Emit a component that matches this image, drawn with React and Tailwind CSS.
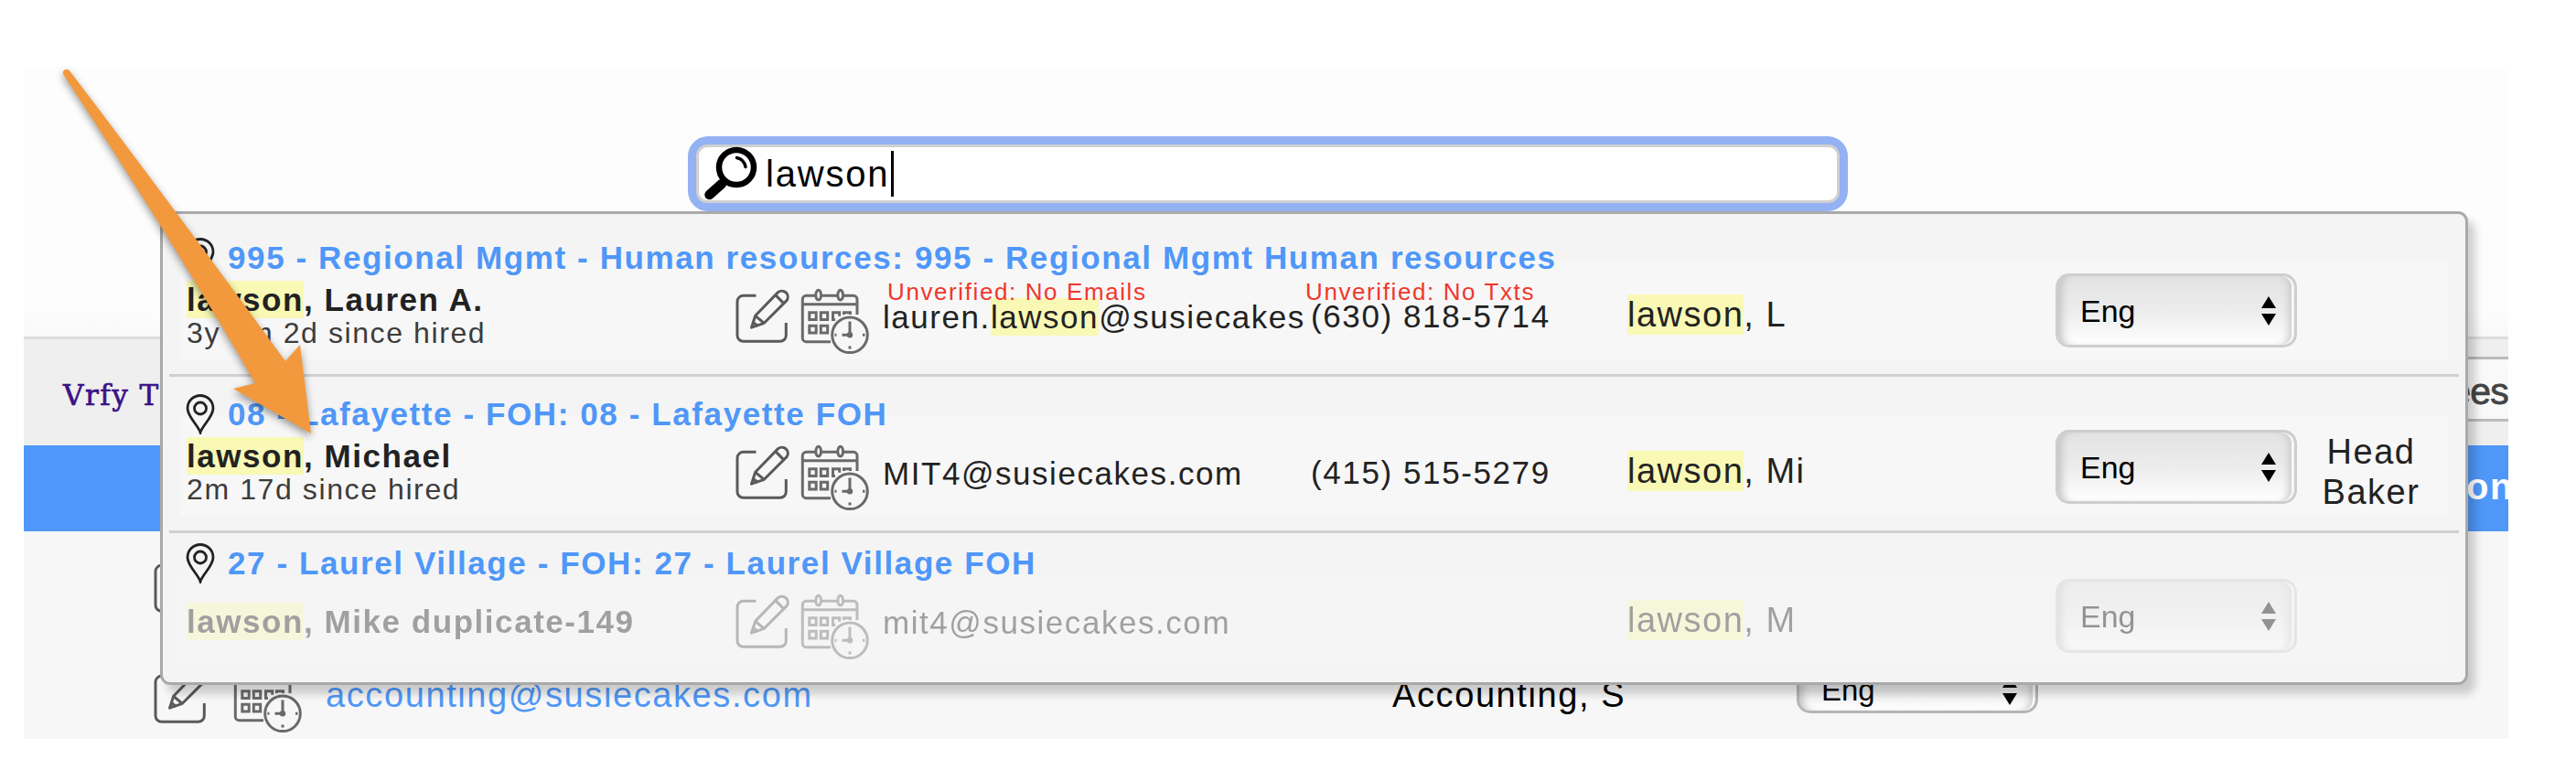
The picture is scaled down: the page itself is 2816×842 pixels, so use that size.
import clsx from "clsx";

const QUERY = "lawson";

const results = [
  {
    id: 1,
    location: "995 - Regional Mgmt - Human resources: 995 - Regional Mgmt Human resources",
    name: "lawson, Lauren A.",
    hired: "3y 4m 2d since hired",
    email: "lauren.lawson@susiecakes.com",
    emailWarning: "Unverified: No Emails",
    phone: "(630) 818-5714",
    phoneWarning: "Unverified: No Txts",
    alias: "lawson, L",
    lang: "Eng",
    rowCls: "h-[178px] pt-[26px] border-b-[3px]",
    boxCls: "-mt-[20px] h-[109px]",
  },
  {
    id: 2,
    location: "08 - Lafayette - FOH: 08 - Lafayette FOH",
    name: "lawson, Michael",
    hired: "2m 17d since hired",
    email: "MIT4@susiecakes.com",
    phone: "(415) 515-5279",
    alias: "lawson, Mi",
    lang: "Eng",
    title: "Head Baker",
    rowCls: "h-[171px] pt-[19px] border-b-[3px]",
    boxCls: "-mt-[20px] h-[109px]",
  },
  {
    id: 3,
    location: "27 - Laurel Village - FOH: 27 - Laurel Village FOH",
    name: "lawson, Mike duplicate-149",
    email: "mit4@susiecakes.com",
    alias: "lawson, M",
    lang: "Eng",
    inactive: true,
    rowCls: "h-[162px] pt-[11px]",
    boxCls: "-mt-[6px] h-[94px]",
  },
];

function Highlight({ text }) {
  const at = text.indexOf(QUERY);
  if (at < 0) return text;
  return (
    <>
      {text.slice(0, at)}
      <mark className="bg-[#f9f9b5] py-px text-inherit">{QUERY}</mark>
      {text.slice(at + QUERY.length)}
    </>
  );
}

function PinIcon() {
  return (
    <svg width="32" height="44" viewBox="0 0 32 44" fill="none" stroke="#222" strokeWidth="2.8">
      <path d="M16 42C14 34.500 2 25 2 15.500a14 14 0 0 1 28 0C30 25 18 34.500 16 42z" />
      <circle cx="16" cy="15.500" r="6.500" />
    </svg>
  );
}

function SearchIcon() {
  return (
    <svg width="60" height="60" viewBox="0 0 60 60" fill="none" stroke="#000" strokeLinecap="round">
      <circle cx="36" cy="23" r="19" strokeWidth="6.500" />
      <path d="M36.500 12.500c5 1 8.500 5 9.500 10" strokeWidth="3.500" />
      <path d="M20 41 6.500 53" strokeWidth="10.500" />
    </svg>
  );
}

function EditIcon() {
  return (
    <svg
      className="shrink-0"
      width="62"
      height="62"
      viewBox="0 0 62 62"
      fill="none"
      stroke="#5a5a5a"
      strokeWidth="3"
      strokeLinejoin="round"
    >
      <path d="M23.500 9.300H9.500A6.500 6.500 0 0 0 3 15.800v37a6.500 6.500 0 0 0 6.500 6.500h40.300a6.500 6.500 0 0 0 6.500-6.500V39" />
      <path d="m18.500 44.200 4.200-12.900L47.500 5.600a6.600 6.600 0 0 1 9.500 9L32.300 39.300z" />
      <path d="m44.800 8.600 8.800 9M22.700 31.300l9.600 8M20.300 38.500l5.200 4" />
    </svg>
  );
}

function ScheduleIcon() {
  return (
    <svg className="shrink-0" width="76" height="76" viewBox="0 0 76 76" fill="none" stroke="#6a6a6a" strokeWidth="3">
      <path d="M33 59.700H6.300a4 4 0 0 1-4-4V13.300a4 4 0 0 1 4-4H16M23.500 9.300H40M47.500 9.300H58a4 4 0 0 1 4 4V30M2.300 18.700H62" />
      <ellipse cx="19.700" cy="8.700" rx="2.900" ry="5.400" />
      <ellipse cx="43.700" cy="8.700" rx="2.900" ry="5.400" />
      <path d="M9.800 27.800h7.400v7.800H9.800zM22.300 27.800h7.400v7.800h-7.400zM9.800 42.300h7.400v7.800H9.800zM22.300 42.300h7.400v7.800h-7.400z" />
      <path d="M38 35.600h-2.500v-7.800h7.200v4M47.500 30v-2.200h7V30" />
      <circle cx="54" cy="52.300" r="19.300" />
      <path d="M54 37.500v14.800H45.500M54 64.500v3M39.500 52.300h-2M70.500 52.300h-2.500" />
      <circle cx="54" cy="52.300" r="3.200" fill="#6a6a6a" stroke="none" />
    </svg>
  );
}

function LangSelect({ value, className }) {
  return (
    <div
      className={clsx(
        "flex w-[264px] shrink-0 items-center justify-between rounded-[15px] border-[3px] bg-gradient-to-b from-[#e3e3e3] via-[#ececec] to-white pr-5 pl-[24px] tracking-normal text-black shadow-[inset_9px_0_8px_-5px_#c4c4c4,inset_-3px_0_0_#f6f6f6,inset_-12px_0_8px_-6px_#c9c9c9]",
        className
      )}
    >
      <span className="leading-10">{value}</span>
      <svg width="16" height="32" viewBox="0 0 16 32">
        <path d="M8 0l8 13H0zM8 32l8-13H0z" />
      </svg>
    </div>
  );
}

function ResultRow({ item }) {
  return (
    <div className={clsx("mx-[7px] border-[#d0d0d0] px-3", item.rowCls)}>
      <div className="relative z-10 flex h-11 items-center pl-[6px]">
        <PinIcon />
        <span className="ml-[14px] text-[35px] leading-10 font-bold tracking-[1.6px] whitespace-nowrap text-[#4f97f8]">
          {item.location}
        </span>
      </div>

      <div className={clsx(item.boxCls, item.inactive ? "bg-[#f5f5f5]" : "bg-[#f7f7f7]")}>
        <div
          className={clsx(
            "grid grid-cols-[599px_162px_464px_350px_468px_264px_162px] pl-[7px] text-[35px] leading-10 whitespace-nowrap text-[#222]",
            item.inactive && "-translate-y-[14px] opacity-40"
          )}
        >
          <div className={item.inactive ? "pt-[42px]" : "pt-6"}>
            <p className="font-bold tracking-[1.55px]">
              <Highlight text={item.name} />
            </p>
            <p className="text-[32px] leading-8 tracking-[1.6px] text-[#3c3c3c]">{item.hired}</p>
          </div>

          <div className="flex gap-[10px] pt-[30px]">
            <EditIcon />
            <ScheduleIcon />
          </div>

          <div className="overflow-hidden pt-6">
            <p className="relative z-10 h-[22px] pl-[5px] text-[26px] leading-[22px] tracking-[1.6px] text-[#f0372b]">
              {item.emailWarning}
            </p>
            <p className="-mt-[3px] w-[462px] tracking-[1.55px]">
              <Highlight text={item.email.length > 24 ? item.email.slice(0, 24) : item.email} />
            </p>
          </div>

          <div className="pt-6">
            <p className="relative z-10 -ml-[2px] h-[22px] text-[26px] leading-[22px] tracking-[1.6px] text-[#f0372b]">
              {item.phoneWarning}
            </p>
            <p className="-mt-1 pl-1 tracking-[1.6px]">{item.phone}</p>
          </div>

          <div className="pt-[39px] text-[38px] leading-[42px]">
            <Highlight text={item.alias} />
          </div>

          <LangSelect value={item.lang} className="mt-[15px] h-[81px] border-[#cecece] text-[34px]" />

          <div className="px-5 pt-[17px] text-center text-[38px] leading-11 whitespace-normal">{item.title}</div>
        </div>
      </div>
    </div>
  );
}

function SearchBox() {
  return (
    <div className="ml-[726px] flex h-[82px] w-[1268px] rounded-[22px] bg-[#93b1f3] p-[9px]">
      <div className="flex flex-1 items-center rounded-[12px] border-[3px] border-[#d0d0d0] bg-white pl-[5px]">
        <SearchIcon />
        <span className="ml-[8px] text-[40px] leading-[46px] tracking-[1.8px] text-black">{QUERY}</span>
        <span className="ml-[2px] h-[50px] w-[3px] bg-black" />
      </div>
    </div>
  );
}

function EmployeePage() {
  return (
    <div className="mt-[73px] ml-[26px] h-[735px] w-[2716px] overflow-hidden bg-[#fdfdfd]">
      <div className="h-[295px] bg-gradient-to-b from-[#fdfdfd] from-90% to-[#f8f8f8] pt-[76px]">
        <SearchBox />
      </div>

      <div className="flex h-[119px] justify-between border-t-[3px] border-[#dcdcdc] bg-[#efefef]">
        <span className="pt-[41px] pl-[43px] font-['DejaVu_Serif',serif] text-[31px] leading-[40px] tracking-[1.5px] text-[#3b1287] [-webkit-text-stroke:0.7px_#3b1287]">
          Vrfy T
        </span>
        <div className="mt-[19px] flex h-[71px] w-[400px] items-center justify-end overflow-hidden border-y-[3px] border-[#bbb] bg-[#f9f9f9]">
          <span className="-mb-[4px] text-[41px] leading-[48px] tracking-[-0.8px] text-[#444] [-webkit-text-stroke:0.8px_#444]">
            Employees
          </span>
        </div>
      </div>

      <div className="flex h-[94px] items-center justify-end overflow-hidden bg-[#4f97f8]">
        <span className="-mr-[6px] mb-1 text-[40px] leading-[44px] font-bold text-white">Location</span>
      </div>

      <div className="bg-[#f7f7f7]">
        <div className="flex h-[121px] pt-7 pl-[141px]">
          <EditIcon />
        </div>
        <div className="flex h-[121px] pt-7 pl-[141px]">
          <EditIcon />
          <div className="-mt-[2px] ml-[26px]">
            <ScheduleIcon />
          </div>
          <span className="mt-[9px] ml-[25px] w-[1166px] text-[38px] leading-[42px] tracking-[1.6px] text-[#4f97f8]">
            accounting@susiecakes.com
          </span>
          <span className="mt-[9px] w-[442px] text-[38px] leading-[42px] tracking-[1.6px] text-black">Accounting, S</span>
          <LangSelect value="Eng" className="-mt-px h-[51px] border-[#b5b5b5] text-[33px]" />
        </div>
      </div>
    </div>
  );
}

function PointerArrow() {
  return (
    <svg
      className="absolute top-0 left-0 z-30 drop-shadow-[0_4px_4px_rgba(0,0,0,0.4)]"
      width="400"
      height="500"
      viewBox="0 0 400 500"
      fill="#f2993d"
    >
      <path d="M69 81c-1.500-4 4-8 7.500-3Q178 211 312 395l16-18 12 97-85-49 24-6Q187 260 69 81z" />
    </svg>
  );
}

export default function App() {
  return (
    <div className="relative flex h-[842px] w-[2816px] overflow-hidden bg-white font-['Liberation_Sans',Arial,sans-serif] tracking-[1.5px]">
      <EmployeePage />

      <div className="absolute top-[231px] left-[175px] z-20 h-[518px] w-[2523px] rounded-[11px] border-[3px] border-[#a9a9a9] bg-[#f4f4f4] shadow-[8px_10px_10px_rgba(0,0,0,0.18)]">
        {results.map((item) => (
          <ResultRow key={item.id} item={item} />
        ))}
      </div>

      <PointerArrow />
    </div>
  );
}
